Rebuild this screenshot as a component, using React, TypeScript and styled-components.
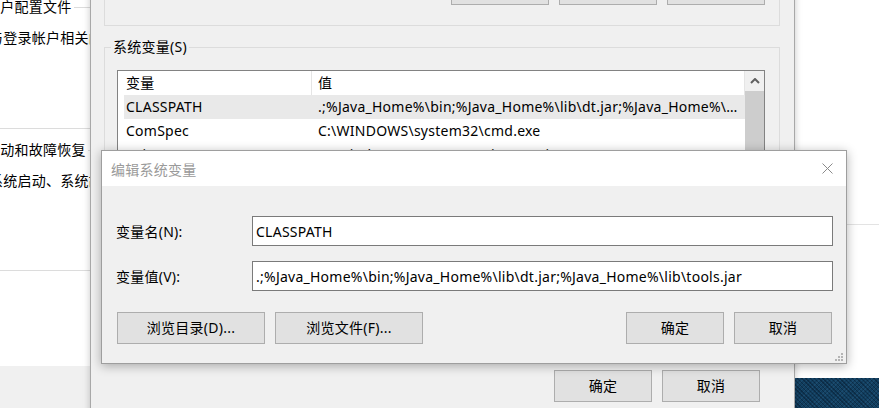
import React from "react";
import styled, { createGlobalStyle } from "styled-components";

const GlobalStyle = createGlobalStyle`
  html, body {
    margin: 0;
    padding: 0;
  }
  body {
    font-family: "Noto Sans", "Noto Sans CJK SC", sans-serif;
    font-size: 14px;
    letter-spacing: 0.25px;
    color: #000;
    background: #fff;
  }
  * {
    box-sizing: border-box;
  }
`;

const variables = [
  { name: "CLASSPATH", value: ".;%Java_Home%\\bin;%Java_Home%\\lib\\dt.jar;%Java_Home%\\lib\\tools.jar", selected: true },
  { name: "ComSpec", value: "C:\\WINDOWS\\system32\\cmd.exe" },
  { name: "DriverData", value: "C:\\Windows\\System32\\Drivers\\DriverData" },
  { name: "JAVA_HOME", value: "C:\\Program Files\\Java\\jdk1.8.0_201" },
  { name: "NUMBER_OF_PROCESSORS", value: "8" },
];

function App() {
  return (
    <>
      <GlobalStyle />
      <Desktop>
        {/* system properties window, mostly behind */}
        <PropsWindow>
          <TabPage>
            <GroupBox $height={122} $bg="#fff">
              <GroupTitle $bg="#fff" $left={5}>用户配置文件</GroupTitle>
              <GroupText>与登录帐户相关的桌面设置</GroupText>
            </GroupBox>
            <GroupBox $height={121} $bg="#fff" $gap={21}>
              <GroupTitle $bg="#fff" $left={5}>启动和故障恢复</GroupTitle>
              <GroupText>系统启动、系统故障和调试信息</GroupText>
            </GroupBox>
          </TabPage>
        </PropsWindow>

        <SideWindow>
          <SideDivider />
        </SideWindow>
        <Wallpaper />

        {/* environment variables window */}
        <EnvWindow>
          <GroupBox $height={65} $bg="#f0f0f0">
            <ButtonRow $top={11} $right={14}>
              <WinButton $w={98}>新建(N)...</WinButton>
              <WinButton $w={98}>编辑(E)...</WinButton>
              <WinButton $w={98}>删除(D)</WinButton>
            </ButtonRow>
          </GroupBox>
          <GroupBox $height={310} $bg="#f0f0f0" $gap={21}>
            <GroupTitle $bg="#f0f0f0" $left={6}>系统变量(S)</GroupTitle>
            <ListView>
              <ListBody>
                <ListHeader>
                  <HeaderCell $w={194} $pad={8}>变量</HeaderCell>
                  <HeaderCell $pad={6}>值</HeaderCell>
                </ListHeader>
                {variables.map((v) => (
                  <ListRow key={v.name} $selected={!!v.selected}>
                    <Cell $w={194}>{v.name}</Cell>
                    <Cell>{v.value}</Cell>
                  </ListRow>
                ))}
              </ListBody>
              <ScrollBar>
                <ScrollArrow>
                  <svg width="10" height="6" viewBox="0 0 10 6">
                    <path d="M1 5 L5 1 L9 5" fill="none" stroke="#606060" strokeWidth="2" />
                  </svg>
                </ScrollArrow>
                <ScrollThumb />
              </ScrollBar>
            </ListView>
          </GroupBox>
          <ButtonRow $top={13} $right={20}>
            <WinButton $w={98}>确定</WinButton>
            <WinButton $w={98}>取消</WinButton>
          </ButtonRow>
        </EnvWindow>

        {/* edit dialog on top */}
        <Dialog>
          <TitleBar>
            <DialogTitle>编辑系统变量</DialogTitle>
            <svg width="11" height="11" viewBox="0 0 11 11">
              <path d="M0.5 0.5 L10.5 10.5 M10.5 0.5 L0.5 10.5" stroke="#8a8a8a" strokeWidth="1" />
            </svg>
          </TitleBar>
          <DialogBody>
            <FieldRow>
              <FieldLabel>变量名(N):</FieldLabel>
              <FieldInput defaultValue="CLASSPATH" />
            </FieldRow>
            <FieldRow>
              <FieldLabel>变量值(V):</FieldLabel>
              <FieldInput defaultValue=".;%Java_Home%\bin;%Java_Home%\lib\dt.jar;%Java_Home%\lib\tools.jar" />
            </FieldRow>
            <DialogButtons>
              <ButtonGroup>
                <WinButton $w={148}>浏览目录(D)...</WinButton>
                <WinButton $w={148}>浏览文件(F)...</WinButton>
              </ButtonGroup>
              <ButtonGroup>
                <WinButton $w={98}>确定</WinButton>
                <WinButton $w={98}>取消</WinButton>
              </ButtonGroup>
            </DialogButtons>
          </DialogBody>
          <SizeGrip width="9" height="9" viewBox="0 0 9 9">
            <rect x="6" y="0" width="2" height="2" fill="#b4b4b4" />
            <rect x="3" y="3" width="2" height="2" fill="#b4b4b4" />
            <rect x="6" y="3" width="2" height="2" fill="#b4b4b4" />
            <rect x="0" y="6" width="2" height="2" fill="#b4b4b4" />
            <rect x="3" y="6" width="2" height="2" fill="#b4b4b4" />
            <rect x="6" y="6" width="2" height="2" fill="#b4b4b4" />
          </SizeGrip>
        </Dialog>
      </Desktop>
    </>
  );
}

const Desktop = styled.div`
  position: relative;
  width: 879px;
  height: 408px;
  overflow: hidden;
  background: #fff;
`;

const PropsWindow = styled.div`
  position: absolute;
  left: -130px;
  top: -40px;
  width: 420px;
  height: 470px;
  background: #f0f0f0;
`;

const TabPage = styled.div`
  background: #fff;
  height: 406px;
  padding: 47px 0 0 108px;
`;

const GroupBox = styled.div<{ $height: number; $bg: string; $gap?: number }>`
  position: relative;
  height: ${(p) => p.$height}px;
  margin-top: ${(p) => p.$gap ?? 0}px;
  border: 1px solid #dcdcdc;
  background: ${(p) => p.$bg};
`;

const GroupTitle = styled.span<{ $bg: string; $left: number }>`
  position: absolute;
  top: -11px;
  left: ${(p) => p.$left}px;
  padding: 0 2px;
  line-height: 20px;
  background: ${(p) => p.$bg};
  white-space: nowrap;
`;

const GroupText = styled.div`
  padding: 20px 0 0 10px;
  line-height: 20px;
  white-space: nowrap;
`;

const SideWindow = styled.div`
  position: absolute;
  left: 795px;
  top: 0;
  width: 100px;
  height: 378px;
  background: #fff;
  padding-top: 224px;
`;

const SideDivider = styled.div`
  border-top: 1px solid #e3e3e3;
`;

const Wallpaper = styled.div`
  position: absolute;
  left: 794px;
  top: 378px;
  width: 90px;
  height: 40px;
  background-color: #123e5e;
  background-image:
    repeating-linear-gradient(45deg, rgba(0, 10, 25, 0.35) 0 1px, transparent 1px 3px),
    repeating-linear-gradient(-45deg, rgba(40, 95, 135, 0.4) 0 1px, transparent 1px 3px);
`;

const EnvWindow = styled.div`
  position: absolute;
  left: 90px;
  top: -40px;
  width: 705px;
  height: 480px;
  background: #f0f0f0;
  border: 1px solid #a8a8a8;
  box-shadow: 0 0 7px rgba(0, 0, 0, 0.22);
  padding: 0 14px 0 13px;
`;

const ButtonRow = styled.div<{ $top: number; $right: number }>`
  display: flex;
  justify-content: flex-end;
  gap: 10px;
  padding-top: ${(p) => p.$top}px;
  padding-right: ${(p) => p.$right}px;
`;

const WinButton = styled.button<{ $w: number }>`
  width: ${(p) => p.$w}px;
  height: 32px;
  background: #e1e1e1;
  border: 1px solid #adadad;
  border-radius: 0;
  font-family: inherit;
  font-size: 14px;
  letter-spacing: inherit;
  color: #000;
  padding: 0;
  line-height: 20px;
`;

const ListView = styled.div`
  margin: 22px 0 0 12px;
  width: 648px;
  height: 240px;
  border: 1px solid #828282;
  background: #fff;
  display: flex;
`;

const ListBody = styled.div`
  flex: 1;
  min-width: 0;
  overflow: hidden;
`;

const ListHeader = styled.div`
  display: flex;
  height: 24px;
  border-right: 1px solid #e5e5e5;
`;

const HeaderCell = styled.div<{ $w?: number; $pad: number }>`
  ${(p) => (p.$w ? `width: ${p.$w}px; border-right: 1px solid #e5e5e5;` : "flex: 1;")}
  padding-left: ${(p) => p.$pad}px;
  line-height: 24px;
`;

const ListRow = styled.div<{ $selected: boolean }>`
  display: flex;
  height: 24px;
  margin-left: 6px;
  padding-left: 2px;
  padding-right: 6px;
  background: ${(p) => (p.$selected ? "#e9e9e9" : "transparent")};
  line-height: 24px;
`;

const Cell = styled.div<{ $w?: number }>`
  ${(p) => (p.$w ? `width: ${p.$w - 2}px; flex-shrink: 0;` : "flex: 1; min-width: 0;")}
  white-space: nowrap;
  overflow: hidden;
  text-overflow: ellipsis;
`;

const ScrollBar = styled.div`
  width: 19px;
  background: #f0f0f0;
  display: flex;
  flex-direction: column;
`;

const ScrollArrow = styled.div`
  height: 20px;
  display: flex;
  align-items: center;
  justify-content: center;
`;

const ScrollThumb = styled.div`
  height: 120px;
  background: #cdcdcd;
`;

const Dialog = styled.div`
  position: absolute;
  left: 101px;
  top: 150px;
  width: 746px;
  height: 214px;
  background: #f0f0f0;
  border: 1px solid #9e9e9e;
  box-shadow: 0 2px 10px rgba(0, 0, 0, 0.3);
`;

const TitleBar = styled.div`
  height: 35px;
  background: #fff;
  display: flex;
  align-items: center;
  justify-content: space-between;
  padding: 0 13px 0 9px;
`;

const DialogTitle = styled.span`
  color: #9a9a9a;
`;

const DialogBody = styled.div`
  padding: 30px 12px 0 14px;
  display: flex;
  flex-direction: column;
  gap: 15px;
`;

const FieldRow = styled.div`
  display: flex;
  align-items: center;
  height: 30px;
`;

const FieldLabel = styled.label`
  width: 136px;
  flex-shrink: 0;
`;

const FieldInput = styled.input`
  width: 581px;
  height: 30px;
  border: 1px solid #7a7a7a;
  background: #fff;
  font-family: inherit;
  font-size: 14px;
  letter-spacing: inherit;
  color: #000;
  padding: 0 3px;
  outline: none;
`;

const DialogButtons = styled.div`
  display: flex;
  justify-content: space-between;
  margin-top: 6px;
  padding: 0 2px 0 1px;
`;

const ButtonGroup = styled.div`
  display: flex;
  gap: 10px;
`;

const SizeGrip = styled.svg`
  position: absolute;
  right: 2px;
  bottom: 1px;
`;

export default App;
